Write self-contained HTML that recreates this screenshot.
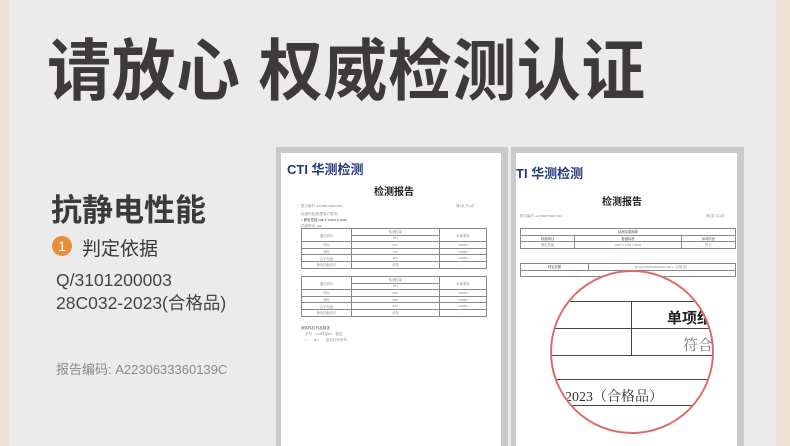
<!DOCTYPE html>
<html><head><meta charset="utf-8"><style>
*{margin:0;padding:0;box-sizing:border-box}
body{width:790px;height:446px;overflow:hidden;background:#ebebeb;position:relative;font-family:"Liberation Sans","Noto Sans CJK SC",sans-serif;color:#3b3838}
.bl{position:absolute;left:0;top:0;width:9px;height:446px;background:#ede2d3}
.br{position:absolute;right:0;top:0;width:14px;height:446px;background:#ede2d3}
.t{position:absolute;left:47px;top:18px;font-size:64px;font-weight:bold;letter-spacing:0.5px;white-space:nowrap;color:#3d3a39;transform:scaleY(1.05);transform-origin:top left}
.a{position:absolute;white-space:nowrap}
.frame{position:absolute;background:#c9cacc}
.paper{position:absolute;background:#fff;overflow:hidden;font-family:"Liberation Serif","Noto Serif CJK SC",serif;color:#555}
.logo{position:absolute;font-family:"Liberation Sans","Noto Sans CJK SC",sans-serif;font-weight:bold;color:#233a7a;font-size:13px;white-space:nowrap}
.h{position:absolute;font-size:10px;font-weight:bold;color:#222;white-space:nowrap;font-family:"Noto Sans CJK SC",sans-serif}
.sm{position:absolute;font-size:3.5px;white-space:nowrap;color:#777}
table{position:absolute;border-collapse:collapse;font-size:3.3px;color:#777}
td{border:0.6px solid #888;height:6.6px;text-align:center}
</style></head><body>
<div class="bl"></div><div class="br"></div>
<div class="t">请放心 权威检测认证</div>
<div class="a" style="left:51px;top:185px;font-size:31px;font-weight:bold;color:#3a3a3a">抗静电性能</div>
<div class="a" style="left:52px;top:236px;width:20px;height:20px;border-radius:50%;background:#e98c3c;color:#fff;font-size:14px;text-align:center;line-height:20px">1</div>
<div class="a" style="left:82px;top:234px;font-size:19px;color:#3a3a3a">判定依据</div>
<div class="a" style="left:56px;top:269px;font-size:17.5px;color:#444;line-height:23px">Q/3101200003<br>28C032-2023(合格品)</div>
<div class="a" style="left:56px;top:359px;font-size:13px;color:#8a8a8a">报告编码: A2230633360139C</div>

<div class="frame" style="left:276px;top:147px;width:232px;height:299px"></div>
<div class="paper" style="left:281px;top:153px;width:220px;height:293px">
 <div class="logo" style="left:6px;top:6px">CTI 华测检测</div>
 <div class="h" style="left:93px;top:30px">检测报告</div>
 <div class="sm" style="left:20px;top:51px">报告编号 A2230633360139C</div>
 <div class="sm" style="left:175px;top:51px">第3页 共4页</div>
 <div class="sm" style="left:20px;top:59px">检测内容(根据客户要求)</div>
 <div class="sm" style="left:20px;top:65px;color:#222">1 静电性能 GB/T 12703.5-2020</div>
 <div class="sm" style="left:20px;top:71px">预测时间: min</div>
 <table style="left:20px;top:75px;width:186px"><tr><td rowspan=2 style="width:50px">测试项目</td><td>检测结果</td><td rowspan=2 style="width:47px">标准要求</td></tr><tr><td>001</td></tr><tr><td>经向</td><td>82V</td><td>≤3000V</td></tr><tr><td>纬向</td><td>79V</td><td>≤3000V</td></tr><tr><td>总平均值</td><td>80V</td><td>≤3000V</td></tr><tr><td>静电性能评价</td><td>优异</td><td>—</td></tr></table>
 <table style="left:20px;top:123px;width:186px"><tr><td rowspan=2 style="width:50px">测试项目</td><td>检测结果</td><td rowspan=2 style="width:47px">标准要求</td></tr><tr><td>001</td></tr><tr><td>经向</td><td>98V</td><td>≤3000V</td></tr><tr><td>纬向</td><td>68V</td><td>≤3000V</td></tr><tr><td>总平均值</td><td>83V</td><td>≤3000V</td></tr><tr><td>静电性能评价</td><td>优异</td><td>—</td></tr></table>
 <div class="sm" style="left:20px;top:173px;color:#222">测试样品 样品描述</div>
 <div class="sm" style="left:24px;top:179px">序号　CTI样品ID　描述</div>
 <div class="sm" style="left:24px;top:185px">1　　001　　蓝色针织布料</div>
</div>

<div class="frame" style="left:511px;top:147px;width:233px;height:299px"></div>
<div class="paper" style="left:516px;top:153px;width:221px;height:293px">
 <div class="logo" style="left:0px;top:10px">TI 华测检测</div>
 <div class="h" style="left:86px;top:40px">检测报告</div>
 <div class="sm" style="left:4px;top:61px">报告编号 A2230633360139C</div>
 <div class="sm" style="left:190px;top:61px">第2页 共4页</div>
 <table style="left:4px;top:75px;width:216px"><tr><td colspan=3 style="color:#222">检测结果摘要</td></tr><tr><td style="color:#222">检测项目</td><td style="color:#222">检测标准</td><td style="color:#222">单项结论</td></tr><tr><td>静电性能</td><td>GB/T 12703.5-2020</td><td>符合</td></tr></table>
 <table style="left:4px;top:110px;width:216px"><tr><td style="width:68px;color:#222">判定依据</td><td>Q/310120000328C032-2023（合格品）</td></tr><tr><td colspan=2>******</td></tr></table>
 <div style="position:absolute;left:34px;top:117px;width:164px;height:164px;border-radius:50%;border:2px solid #e06a6a;background:#fff;overflow:hidden">
  <div style="position:absolute;left:0;top:29px;width:164px;border-top:1.4px solid #444"></div>
  <div style="position:absolute;left:0;top:56px;width:164px;border-top:1.4px solid #444"></div>
  <div style="position:absolute;left:0;top:83px;width:164px;border-top:1.4px solid #444"></div>
  <div style="position:absolute;left:0;top:107px;width:164px;border-top:1.4px solid #444"></div>
  <div style="position:absolute;left:0;top:133px;width:164px;border-top:1.4px solid #444"></div>
  <div style="position:absolute;left:79px;top:29px;height:54px;border-left:1.4px solid #444"></div>
  <div class="h" style="left:115px;top:35px;font-size:15px">单项结</div>
  <div class="a" style="left:131px;top:62px;font-size:15px;color:#777;font-family:'Noto Serif CJK SC',serif">符合</div>
  <div class="a" style="left:13px;top:114px;font-size:14px;color:#333;font-family:'Liberation Serif','Noto Serif CJK SC',serif">2023（合格品）</div>
 </div>
</div>
</body></html>
